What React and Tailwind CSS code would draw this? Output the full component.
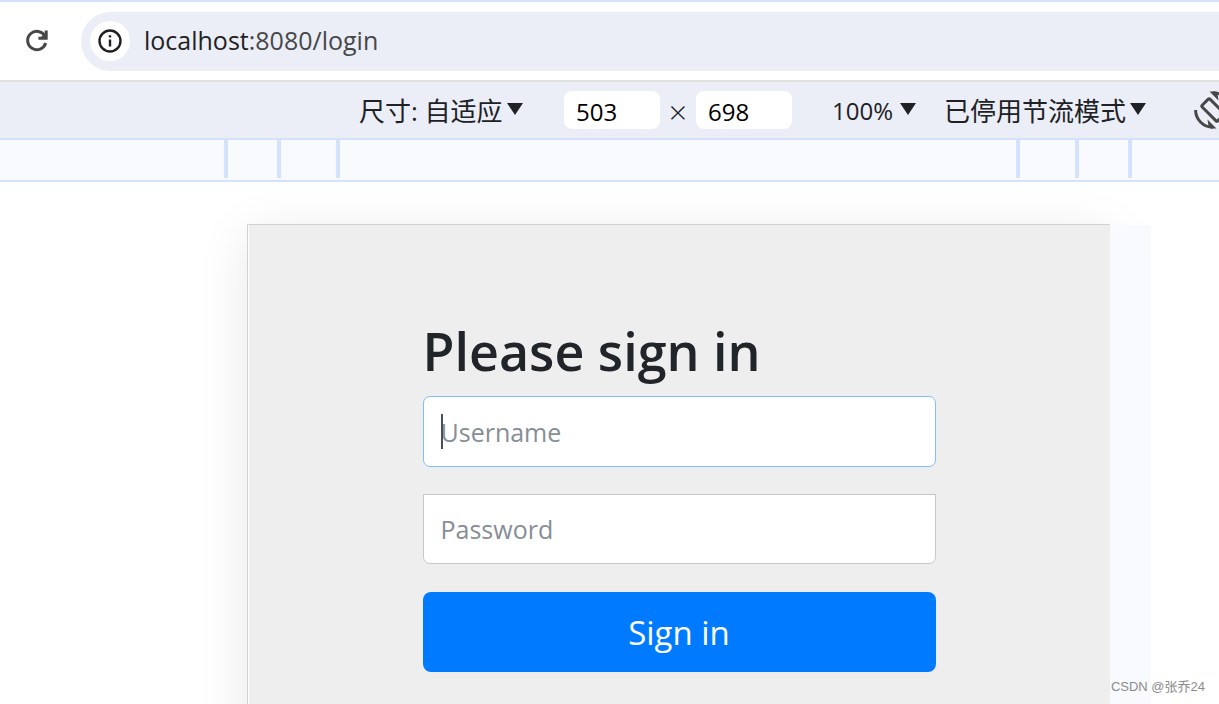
const UI = "font-['Open_Sans','Noto_Sans_CJK_SC',sans-serif]";

function Caret() {
  return (
    <svg className="pointer-events-none absolute top-3 right-0" width="16" height="12" viewBox="0 0 16 12" aria-hidden="true">
      <path d="M0 0H16L8 12Z" fill="#202124" />
    </svg>
  );
}

function ToolbarSelect({ label, value, className }) {
  return (
    <div className={`relative flex h-[38px] shrink-0 items-center ${className}`}>
      <select aria-label={label} className="w-full appearance-none bg-transparent leading-8 text-[#202124] outline-none">
        <option>{value}</option>
      </select>
      <Caret />
    </div>
  );
}

function SizeInput({ label, value }) {
  return (
    <input
      aria-label={label}
      defaultValue={value}
      className="h-[38px] w-24 shrink-0 rounded-lg bg-white px-3 pt-0.5 text-2xl text-black outline-none"
    />
  );
}

function AddressBar() {
  return (
    <header className="flex h-[82px] shrink-0 items-center border-t-2 border-b-2 border-t-[#d3e3fd] border-b-[#e0e1dd] bg-white pl-6">
      <button aria-label="Reload" className="flex size-[26px] items-center justify-center">
        <svg width="26" height="26" viewBox="0 0 26 26" fill="none" stroke="#474747" strokeWidth="3" aria-hidden="true">
          <path d="M21 8.2A9.2 9.2 0 1 0 21.7 15" />
          <path d="M22.2 2.6V10.2H14.4" />
          <path d="M22.6 3.5V10.5H15.6Z" fill="#474747" stroke="none" />
        </svg>
      </button>
      <div className="ml-[31px] flex h-[59px] flex-1 items-center rounded-l-full bg-[#ebeef7] pl-[9px]">
        <button aria-label="View site information" className="flex size-10 shrink-0 items-center justify-center rounded-full bg-white">
          <svg width="24" height="24" viewBox="0 0 24 24" aria-hidden="true">
            <circle cx="12" cy="12" r="10.5" fill="none" stroke="#1f1f1f" strokeWidth="2.4" />
            <path d="M10.8 6.2h2.4v2.4h-2.4zM10.8 10.6h2.4v7h-2.4z" fill="#1f1f1f" />
          </svg>
        </button>
        <p className="ml-3.5 pb-0.5 text-[25px] leading-8 text-[#474747]">
          <span className="text-[#1f1f1f]">localhost</span>:8080/login
        </p>
      </div>
    </header>
  );
}

function DeviceToolbar() {
  return (
    <div className="flex h-14 shrink-0 items-center overflow-hidden bg-[#ebeef6] pl-[359px]">
      <ToolbarSelect label="尺寸" value="尺寸: 自适应" className="w-[164px] pt-0.5 text-[26px]" />
      <div className="ml-[41px] flex shrink-0 items-center">
        <SizeInput label="Width" value="503" />
        <span className="w-9 pt-1 text-center text-[32px] leading-8 font-light text-[#202124]">×</span>
        <SizeInput label="Height" value="698" />
      </div>
      <ToolbarSelect label="缩放" value="100%" className="ml-10 w-[84px] pt-0.5 text-2xl" />
      <ToolbarSelect label="节流" value="已停用节流模式" className="ml-7 w-[202px] pt-0.5 text-[26px]" />
      <button aria-label="旋转" className="ml-12 shrink-0">
        <svg width="38" height="38" viewBox="0 0 38 38" fill="none" stroke="#474747" strokeWidth="3" aria-hidden="true">
          <rect x="13.5" y="8" width="11" height="22" rx="1.2" transform="rotate(-45 19 19)" />
          <path d="M1.6 19A17.2 17.2 0 0 0 19 36.2M36.4 19A17.2 17.2 0 0 0 19 1.8" />
          <path d="M13.5 28.5L22.5 37.5H17L14.5 35ZM24.5 9.5L15.5 .5H21L23.5 3Z" fill="#474747" stroke="none" />
        </svg>
      </button>
    </div>
  );
}

function Ruler() {
  const tick = "h-[38px] w-1 shrink-0 bg-[#d3e3fd]";
  return (
    <div className="flex h-11 shrink-0 justify-center border-y-2 border-[#d3e3fd] bg-[#f8fafe] pl-[137px]">
      <i className={tick} />
      <i className={`${tick} ml-[49px]`} />
      <i className={`${tick} ml-[55px]`} />
      <i className={`${tick} ml-[676px]`} />
      <i className={`${tick} ml-[55px]`} />
      <i className={`${tick} ml-[49px]`} />
    </div>
  );
}

function LoginForm() {
  const field = "block w-full border bg-white px-[17px] text-[25px] text-[#495057] outline-none placeholder:text-[#868e96]";
  return (
    <form className="mx-auto w-[513px] pt-[93px]" onSubmit={(e) => e.preventDefault()}>
      <h1 className="mb-3 text-[52px] leading-[66px] font-semibold text-[#212529]">Please sign in</h1>
      <div className="relative">
        <input aria-label="Username" placeholder="Username" className={`${field} h-[71px] rounded-[7px] border-[#80bdff]`} />
        <span className="absolute top-[18px] left-[18px] h-[35px] w-0.5 bg-[#495057]" />
      </div>
      <input aria-label="Password" type="password" placeholder="Password" className={`${field} mt-[27px] h-[70px] rounded-b-[7px] border-[#c8c8c8]`} />
      <button type="submit" className="mt-7 h-20 w-full rounded-lg bg-[#007bff] pt-0.5 text-[33px] text-white">Sign in</button>
    </form>
  );
}

export default function App() {
  return (
    <div className={`relative flex h-screen flex-col overflow-hidden bg-white ${UI}`}>
      <AddressBar />
      <DeviceToolbar />
      <Ruler />
      <main className="flex min-h-0 flex-1 justify-center overflow-hidden bg-white pt-[42px] pl-[137px]">
        <div className="relative h-[1200px] w-[863px] shrink-0 border-t border-l border-[#d2d2d2] bg-[#eeeeee] shadow-[0_10px_50px_rgba(0,0,0,0.09)]">
          <div className="h-full border-l border-white">
            <LoginForm />
          </div>
          <div className="absolute top-0 left-full h-full w-[41px] bg-[#f8fafe]" />
        </div>
      </main>
      <p className="absolute right-[14px] bottom-[7px] font-['Liberation_Sans','Noto_Sans_CJK_SC',sans-serif] text-[13px] leading-5 text-[#8c8c8c]">CSDN @张乔24</p>
    </div>
  );
}
